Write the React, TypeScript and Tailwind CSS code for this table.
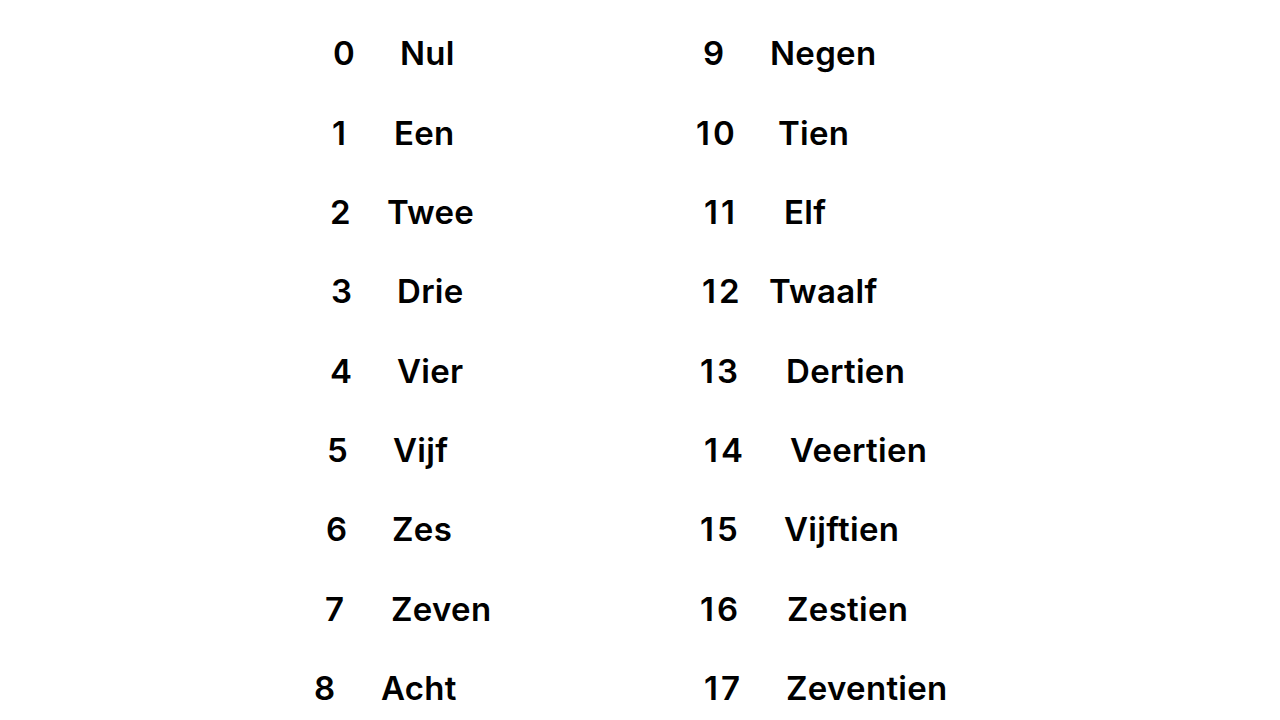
import React from "react";

type Row = { n: string; np: string; w: string; wp: string };

const left: Row[] = [
  { n: "0", np: "pl-[333px]", w: "Nul", wp: "pl-[30px]" },
  { n: "1", np: "pl-[332px]", w: "Een", wp: "pl-[24px]" },
  { n: "2", np: "pl-[330px]", w: "Twee", wp: "pl-[17px]" },
  { n: "3", np: "pl-[331px]", w: "Drie", wp: "pl-[27px]" },
  { n: "4", np: "pl-[330px]", w: "Vier", wp: "pl-[27px]" },
  { n: "5", np: "pl-[327px]", w: "Vijf", wp: "pl-[23px]" },
  { n: "6", np: "pl-[326px]", w: "Zes", wp: "pl-[22px]" },
  { n: "7", np: "pl-[325px]", w: "Zeven", wp: "pl-[21px]" },
  { n: "8", np: "pl-[314px]", w: "Acht", wp: "pl-[11px]" },
];

const right: Row[] = [
  { n: "9", np: "pl-[23px]", w: "Negen", wp: "pl-[10px]" },
  { n: "10", np: "pl-[16px]", w: "Tien", wp: "pl-[18px]" },
  { n: "11", np: "pl-[24px]", w: "Elf", wp: "pl-[24px]" },
  { n: "12", np: "pl-[22px]", w: "Twaalf", wp: "pl-[9px]" },
  { n: "13", np: "pl-[20px]", w: "Dertien", wp: "pl-[26px]" },
  { n: "14", np: "pl-[24px]", w: "Veertien", wp: "pl-[30px]" },
  { n: "15", np: "pl-[20px]", w: "Vijftien", wp: "pl-[24px]" },
  { n: "16", np: "pl-[20px]", w: "Zestien", wp: "pl-[27px]" },
  { n: "17", np: "pl-[24px]", w: "Zeventien", wp: "pl-[26px]" },
];

export default function App() {
  return (
    <div
      className="w-[1280px] h-[720px] bg-white text-black overflow-hidden pt-[14px] font-semibold text-[33px]"
      style={{ fontFamily: "Inter, 'Noto Sans', sans-serif" }}
    >
      {left.map((l, i) => {
        const r = right[i];
        return (
          <div
            key={i}
            className="grid grid-cols-[370px_310px_80px_520px] h-[79.375px] items-center leading-none whitespace-nowrap"
          >
            <div className={`${l.np} tracking-[3px]`}>{l.n}</div>
            <div className={`${l.wp} tracking-[0.3px]`}>{l.w}</div>
            <div className={`${r.np} tracking-[3px]`}>{r.n}</div>
            <div className={`${r.wp} tracking-[0.3px]`}>{r.w}</div>
          </div>
        );
      })}
    </div>
  );
}
